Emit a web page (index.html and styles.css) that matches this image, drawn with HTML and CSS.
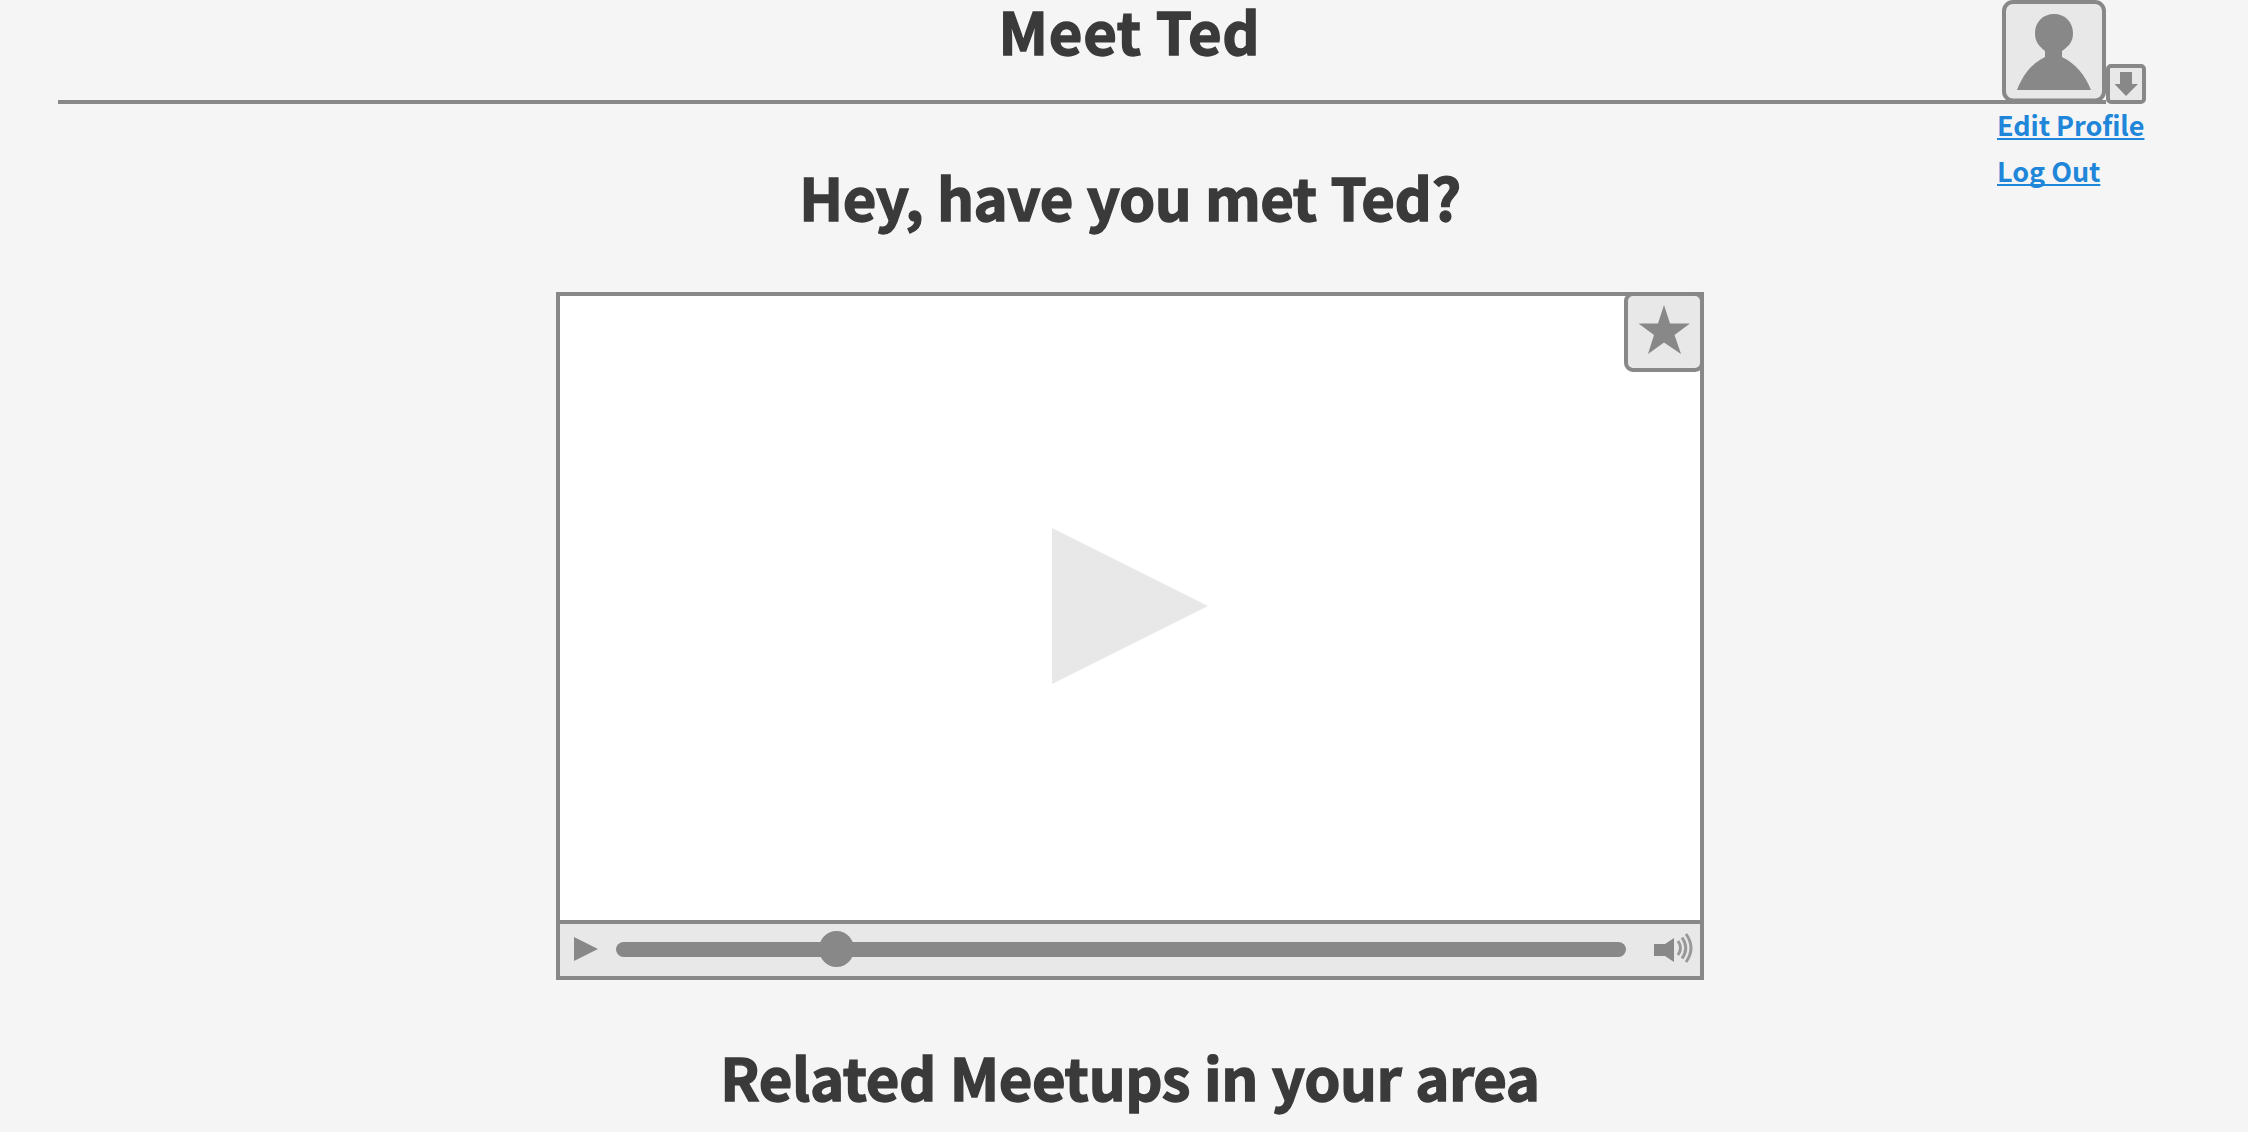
FILE: index.html
```
<!DOCTYPE html>
<html lang="en">
<head>
<meta charset="utf-8">
<title>Meet Ted</title>
<link rel="stylesheet" href="styles.css">
</head>
<body>
<main class="page">
  <header class="header">
    <h1 class="title">Meet Ted</h1>
    <div class="account">
      <div class="controls">
        <svg class="avatar" viewBox="0 0 104 104"><rect x="2" y="2" width="100" height="98.500" rx="9"/><path d="M52 14C63 14 71 22 71 33C71 42 67 46 60 51V57C74 64 83 75 89 90H15C21 75 29 64 43 57V51C37 46 33 42 33 33C33 22 41 14 52 14Z"/></svg>
        <svg class="menu-button" viewBox="0 0 40 40"><rect x="2" y="2" width="36" height="36" rx="3"/><path d="M14 8H26V20H32L20 32L8.500 20H14Z"/></svg>
      </div>
      <nav class="links"><a href="#">Edit Profile</a><a href="#">Log Out</a></nav>
    </div>
  </header>
  <h2 class="question">Hey, have you met Ted?</h2>
  <section class="player">
    <div class="screen">
      <svg class="play" viewBox="0 0 156 156"><path d="M0 0L156 78L0 156Z"/></svg>
      <svg class="favorite" viewBox="0 0 80 80"><rect x="2" y="2" width="76" height="76" rx="7"/><path d="M40 13L46 31.500H66L50.500 43L57 62L40 50.500L24 62L30 43L14.500 31.500H34Z"/></svg>
    </div>
    <div class="bar">
      <svg class="small-play" viewBox="0 0 24 24"><path d="M0 0L24 12L0 24Z"/></svg>
      <div class="track"><span class="knob"></span></div>
      <svg class="volume" viewBox="0 0 40 32"><path d="M0 12H11L20 6V30L11 24H0Z"/><g><path d="M24 9Q29 16 24 23"/><path d="M28 5.500Q35.500 16 28 26.500"/><path d="M32 2Q42 16 32 30"/></g></svg>
    </div>
  </section>
  <h2 class="related">Related Meetups in your area</h2>
</main>
</body>
</html>
```
FILE: styles.css
```
* { box-sizing: border-box; }
body {
  margin: 0;
  height: 1132px;
  overflow: hidden;
  background: #f5f5f5;
  color: #3a3a3a;
  font-family: "Noto Sans CJK JP", "Noto Sans", sans-serif;
}
svg { display: block; flex: none; fill: #888; }
svg rect { fill: #e8e8e8; stroke: #888; stroke-width: 4; }
.page { width: 2146px; padding-left: 58px; }
.header {
  position: relative;
  display: flex;
  align-items: flex-start;
  justify-content: center;
  width: 2048px;
  height: 104px;
  border-bottom: 4px solid #888;
}
.title, .question, .related {
  margin: 0;
  padding-left: 56px;
  font-size: 58px;
  line-height: 80px;
  font-weight: 700;
  text-align: center;
  white-space: nowrap;
  -webkit-text-stroke: 1.4px #3a3a3a;
}
.title {
  padding-left: 95px;
  height: 70px;
  line-height: 60px;
  letter-spacing: 0.7px;
}
.question { padding-top: 52px; height: 188px; letter-spacing: -0.5px; word-spacing: 1px; }
.related { padding-top: 56px; letter-spacing: -0.4px; word-spacing: 1px; }
/* account menu hangs over the header rule */
.account { position: absolute; top: 0; right: -40px; width: 149px; }
.controls { display: flex; align-items: flex-end; justify-content: flex-end; }
.avatar { width: 104px; height: 104px; }
.menu-button { width: 40px; height: 40px; }
.links { display: flex; flex-direction: column; align-items: flex-start; margin-top: -2px; }
.links a {
  color: #2086da;
  font-size: 27px;
  line-height: 46px;
  font-weight: 700;
  letter-spacing: -0.05px;
  white-space: nowrap;
  text-decoration-thickness: 2px;
  text-underline-offset: 2px;
  text-decoration-skip-ink: none;
}
.player {
  width: 1148px;
  height: 688px;
  margin-left: 498px;
  display: flex;
  flex-direction: column;
  border: 4px solid #888;
}
.screen {
  position: relative;
  flex: 1;
  display: flex;
  align-items: center;
  justify-content: center;
  background: #fff;
}
.play { width: 156px; height: 156px; fill: #e8e8e8; margin: -4px 0 0 -1px; }
.favorite { position: absolute; top: -4px; right: -4px; width: 80px; height: 80px; }
.bar {
  height: 56px;
  display: flex;
  align-items: center;
  padding: 0 6px 2px 14px;
  border-top: 4px solid #888;
  background: #e8e8e8;
}
.small-play { width: 24px; height: 24px; }
.track { position: relative; width: 1011px; height: 15px; margin: 0 28px 0 18px; border-radius: 8px; background: #888; }
.knob { position: absolute; left: 203px; top: -11px; width: 35px; height: 36px; border-radius: 50%; background: #888; }
.volume { width: 40px; height: 32px; margin-top: -3px; }
.volume g { fill: none; stroke: #999; stroke-width: 3; }
```
